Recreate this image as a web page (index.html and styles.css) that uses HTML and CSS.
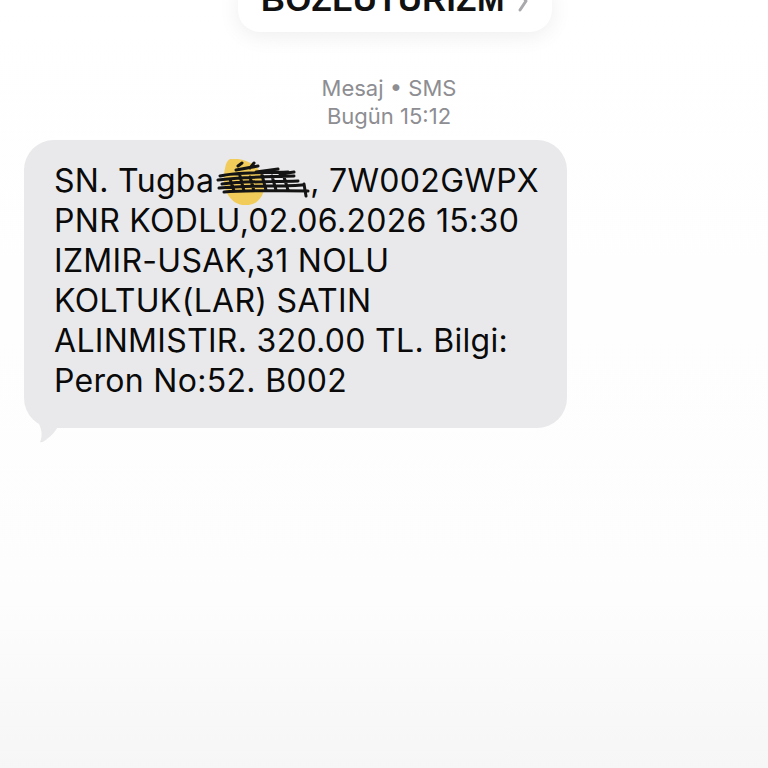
FILE: index.html
```html
<!DOCTYPE html>
<html lang="tr">
<head>
<meta charset="utf-8">
<link rel="stylesheet" href="styles.css">
</head>
<body>
<div class="screen">
  <div class="header">
    <div class="pill">
      <span class="sender">BOZLUTURIZM</span>
      <svg class="chev" width="12" height="22" viewBox="0 0 12 22"><path d="M3 2 L9 11 L3 20" fill="none" stroke="#a9a9ad" stroke-width="3" stroke-linecap="round" stroke-linejoin="round"/></svg>
    </div>
  </div>
  <div class="meta">
    <div>Mesaj • SMS</div>
    <div>Bugün 15:12</div>
  </div>
  <div class="row">
    <div class="bubble">
      <p class="msg">SN. Tugba<span class="scribble"><svg width="98" height="46" viewBox="0 0 98 46"><path d="M14 0 C30 -2 46 8 48 22 C50 38 40 48 26 46 C14 44 6 30 8 16 C9 8 10 2 14 0 Z" fill="#f3c94a" opacity="0.9"/><path d="M4 17 C20 13 40 14 72 13 M2 21 C25 18 50 18 78 17 M6 25 C30 22 55 23 82 22 M3 29 C30 26 60 28 86 26 M8 33 C30 31 60 32 92 32 M20 11 L42 7 M40 13 L62 10 M64 15 L78 13 M88 25 L90 37 M14 20 L18 32 M24 17 L28 32 M34 18 L38 32 M46 16 L50 31 M56 17 L60 31 M68 18 L72 31 M22 7 L26 4 M34 9 L38 4" fill="none" stroke="#141414" stroke-width="3" stroke-linecap="round"/></svg></span>, 7W002GWPX<br>PNR KODLU,02.06.2026 15:30<br>IZMIR-USAK,31 NOLU<br>KOLTUK(LAR) SATIN<br>ALINMISTIR. 320.00 TL. Bilgi:<br>Peron No:52. B002</p>
      <svg class="tail" width="30" height="26" viewBox="0 0 30 26"><path d="M2 0 L28 0 C24 10 20 16 14 20 C11 23 8 25 6 24 C9 18 8 10 2 0 Z" fill="#e9e9eb"/></svg>
    </div>
  </div>
</div>
</body>
</html>
```

FILE: styles.css
```css
html, body {
  margin: 0;
  padding: 0;
}
body {
  width: 768px;
  height: 768px;
  overflow: hidden;
  background: linear-gradient(to bottom, #ffffff 0px, #fdfdfd 600px, #f6f6f6 768px);
  font-family: Inter, "Liberation Sans", Arial, sans-serif;
}
.screen {
  display: flex;
  flex-direction: column;
}
.header {
  display: flex;
  justify-content: center;
  padding-left: 22px;
  height: 32px;
  overflow: visible;
}
.pill {
  width: 314px;
  height: 52px;
  margin-top: -20px;
  background: #fff;
  border-radius: 22px;
  box-shadow: 0 4px 22px rgba(0,0,0,0.07);
  display: flex;
  align-items: flex-end;
  justify-content: center;
  gap: 12px;
  box-sizing: border-box;
  padding-bottom: 22px;
  overflow: hidden;
}
.sender {
  font-family: "Liberation Sans", Arial, sans-serif;
  font-weight: bold;
  font-size: 33px;
  line-height: 33px;
  color: #111;
  letter-spacing: 0.5px;
  margin-bottom: -6px;
}
.chev {
  margin-bottom: -2px;
}
.meta {
  margin-top: 42px;
  padding-left: 10px;
  text-align: center;
  color: #8d8d92;
  font-size: 22px;
  line-height: 28px;
}
.row {
  display: flex;
  padding-left: 24px;
  margin-top: 10px;
}
.bubble {
  position: relative;
  width: 543px;
  height: 288px;
  box-sizing: border-box;
  background: #e9e9eb;
  border-radius: 30px;
  padding: 21px 0 0 30px;
}
.msg {
  margin: 0;
  font-size: 32px;
  line-height: 40px;
  letter-spacing: 0.3px;
  color: #0a0a0a;
  white-space: nowrap;
}
.scribble {
  display: inline-block;
  width: 96px;
  height: 40px;
  vertical-align: top;
  position: relative;
}
.scribble svg {
  position: absolute;
  left: 2px;
  top: -2px;
}
.tail {
  position: absolute;
  left: 10px;
  top: 278px;
}
```
